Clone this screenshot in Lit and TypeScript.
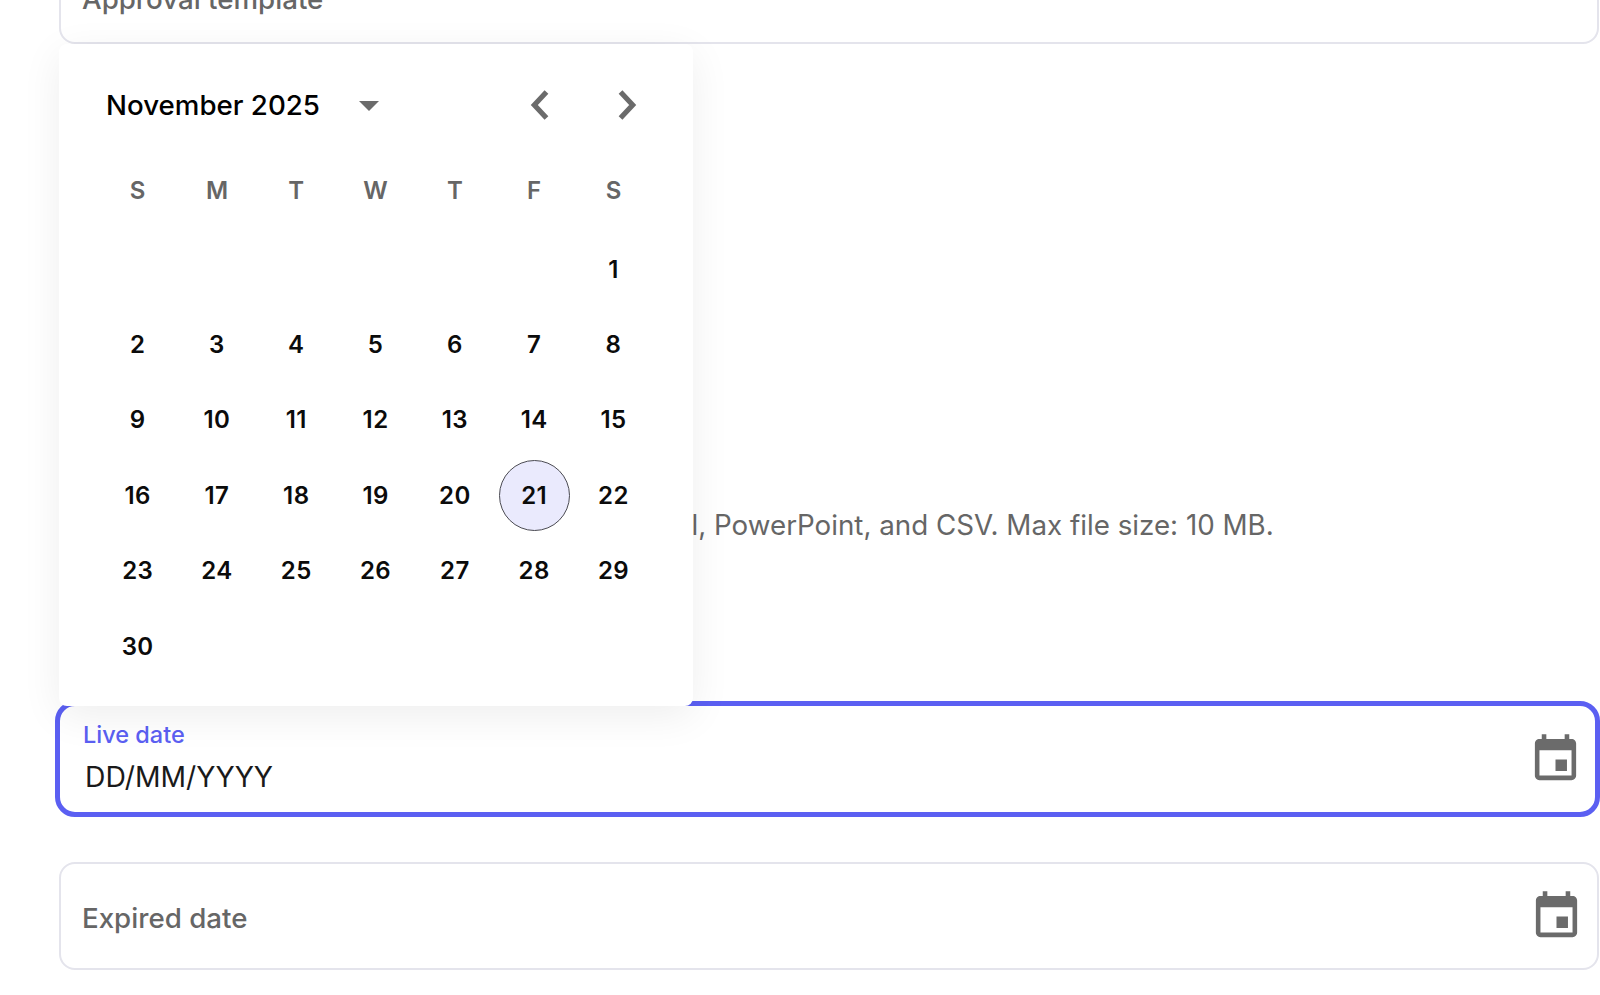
import { LitElement, html, css, svg } from 'lit';
import { customElement } from 'lit/decorators.js';

const WEEKDAYS = ['S', 'M', 'T', 'W', 'T', 'F', 'S'];
const FIRST_WEEKDAY = 6; // 1 Nov 2025 is a Saturday
const DAYS_IN_MONTH = 30;
const SELECTED_DAY = 21;

const eventIcon = svg`<path d="M17 12h-5v5h5v-5zM16 1v2H8V1H6v2H5c-1.11 0-1.99.9-1.99 2L3 19c0 1.1.89 2 2 2h14c1.1 0 2-.9 2-2V5c0-1.1-.9-2-2-2h-1V1h-2zm3 18H5V8h14v11z"></path>`;

@customElement('app-root')
export class AppRoot extends LitElement {
  static styles = css`
    :host {
      display: block;
      position: relative;
      height: 995px;
      overflow: hidden;
      background: #fff;
      font-family: Inter, 'Liberation Sans', sans-serif;
      color: #666;
    }

    .form {
      display: flex;
      flex-direction: column;
      margin-top: -64px;
      padding: 0 1px 0 59px;
    }

    .field {
      display: flex;
      align-items: center;
      justify-content: space-between;
      box-sizing: border-box;
      height: 108px;
      padding: 0 13px 0 21px;
      border: 2px solid #e4e4ec;
      border-radius: 16px;
      font-size: 27.7px;
      font-weight: 500;
    }

    .field.first {
      padding-top: 18px;
    }

    .field.focused {
      height: 116px;
      margin: 0 -1px 45px -4px;
      padding-left: 23px;
      padding-right: 12px;
      border: 5px solid #5b5ff2;
      border-radius: 20px;
    }

    .placeholder {
      margin-top: 3px;
    }

    .value-wrap {
      display: flex;
      flex-direction: column;
      gap: 11px;
      margin-top: -4px;
    }

    .label {
      font-size: 23.5px;
      font-weight: 500;
      line-height: 29px;
      color: #5b5ff2;
    }

    .value {
      margin-left: 2px;
      font-size: 28.3px;
      font-weight: 400;
      line-height: 34px;
      color: #1a1a1a;
    }

    .field svg {
      width: 55px;
      height: 55px;
      fill: #6b6b6b;
    }

    .upload {
      box-sizing: border-box;
      height: 657px;
      padding: 464px 0 0 30px;
      font-size: 27.75px;
      line-height: 34px;
      font-weight: 400;
      white-space: nowrap;
    }

    .popover {
      position: absolute;
      left: 59px;
      top: 44px;
      box-sizing: border-box;
      width: 634px;
      height: 661.5px;
      padding: 0 39px;
      background: #fff;
      border-radius: 8px;
      box-shadow: 0 10px 40px rgba(0, 0, 0, 0.07);
      color: #000;
    }

    .cal-head {
      display: flex;
      align-items: center;
      height: 122px;
      padding-left: 8px;
    }

    .month {
      font-size: 27.7px;
      font-weight: 500;
      color: #000;
    }

    .caret {
      width: 48px;
      height: 48px;
      margin-left: 25px;
      fill: #6b6b6b;
    }

    .nav {
      display: flex;
      gap: 25px;
      margin-left: auto;
      margin-right: -4px;
    }

    .nav svg {
      width: 62px;
      height: 62px;
      fill: none;
      stroke: #6b6b6b;
      stroke-width: 2;
    }

    .grid {
      display: grid;
      grid-template-columns: repeat(7, 79.3px);
    }

    .weekday {
      display: flex;
      align-items: center;
      justify-content: center;
      height: 48px;
      font-size: 24px;
      font-weight: 600;
      color: #666;
    }

    .days {
      margin-top: 17.5px;
      grid-auto-rows: 75.4px;
    }

    .day {
      display: flex;
      align-items: center;
      justify-content: center;
      font-size: 24px;
      font-weight: 560;
      letter-spacing: 0.4px;
      color: #0b0b0b;
    }

    .day.selected span {
      display: flex;
      align-items: center;
      justify-content: center;
      box-sizing: border-box;
      width: 71px;
      height: 71px;
      border: 1.5px solid #4a4a52;
      border-radius: 50%;
      background: #eaeafd;
    }
  `;

  private renderDays() {
    const blanks = Array.from({ length: FIRST_WEEKDAY }, () => html`<div></div>`);
    const days = Array.from({ length: DAYS_IN_MONTH }, (_, i) => {
      const day = i + 1;
      return html`<div class="day ${day === SELECTED_DAY ? 'selected' : ''}"><span>${day}</span></div>`;
    });
    return [...blanks, ...days];
  }

  render() {
    return html`
      <div class="form">
        <div class="field first"><span>Approval template</span></div>
        <div class="upload">Supported file types include: PDF, Word, Excel, PowerPoint, and CSV. Max file size: 10 MB.</div>
        <div class="field focused">
          <div class="value-wrap">
            <div class="label">Live date</div>
            <div class="value">DD/MM/YYYY</div>
          </div>
          <svg viewBox="0 0 24 24">${eventIcon}</svg>
        </div>
        <div class="field">
          <span class="placeholder">Expired date</span>
          <svg viewBox="0 0 24 24">${eventIcon}</svg>
        </div>
      </div>

      <div class="popover">
        <div class="cal-head">
          <span class="month">November 2025</span>
          <svg class="caret" viewBox="0 0 24 24"><path d="M7 10l5 5 5-5z"></path></svg>
          <div class="nav">
            <svg viewBox="0 0 24 24"><path d="M14.5 7 9.8 12l4.7 5"></path></svg>
            <svg viewBox="0 0 24 24"><path d="M9.5 7l4.7 5-4.7 5"></path></svg>
          </div>
        </div>
        <div class="grid">
          ${WEEKDAYS.map((d) => html`<div class="weekday">${d}</div>`)}
        </div>
        <div class="grid days">${this.renderDays()}</div>
      </div>
    `;
  }
}
